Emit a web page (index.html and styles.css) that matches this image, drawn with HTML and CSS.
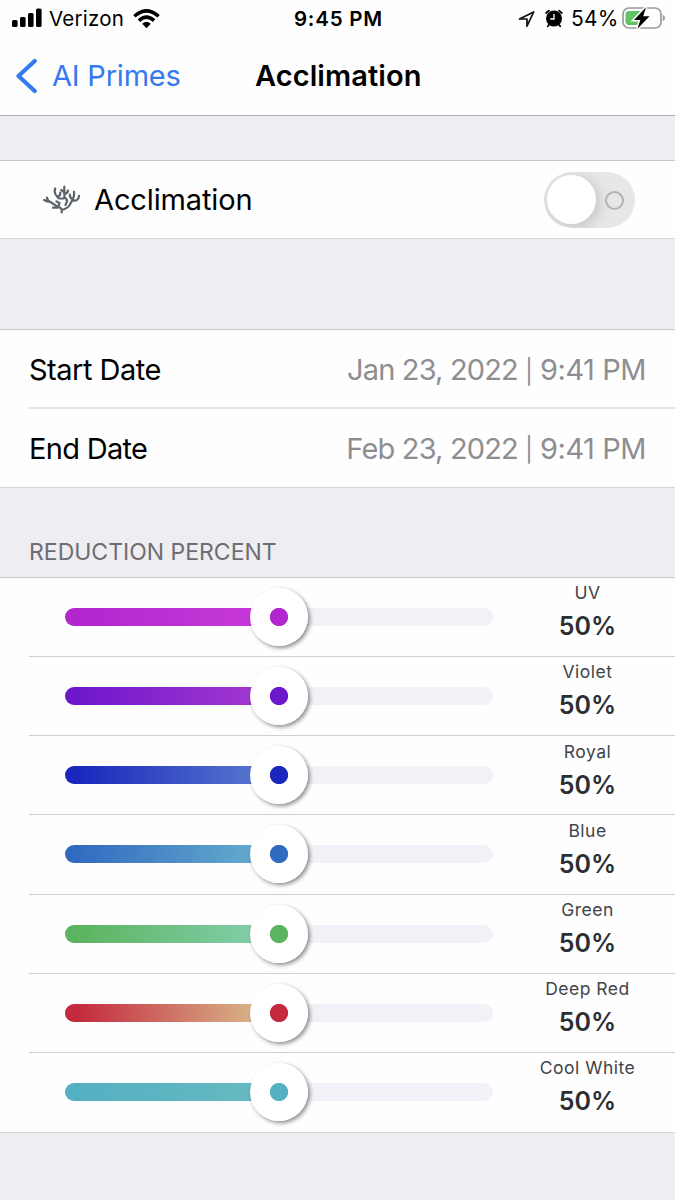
FILE: index.html
```html
<!DOCTYPE html>
<html lang="en">
<head>
<meta charset="utf-8">
<title>Acclimation</title>
<link rel="stylesheet" href="styles.css">
</head>
<body>
<header class="header">
  <div class="status">
    <div class="status-left">
      <svg class="signal" width="30" height="20" viewBox="0 0 30 20"><rect x="0" y="12" width="5.6" height="7" rx="1.5"/><rect x="8" y="9" width="5.6" height="10" rx="1.5"/><rect x="16" y="5" width="5.6" height="14" rx="1.5"/><rect x="24" y="0.5" width="5.6" height="18.5" rx="1.5"/></svg>
      <span class="carrier">Verizon</span>
      <svg class="wifi" width="27" height="20" viewBox="0 0 27 20"><g fill="none" stroke="#000" stroke-width="3.5"><path d="M1.4 7.2Q13.5-3.600 25.6 7.200"/><path d="M5.900 11.600Q13.500 4.800 21.100 11.600"/></g><path d="M9.200 14.700Q13.500 11 17.800 14.700L13.500 19.200Z"/></svg>
    </div>
    <span class="clock">9:45 PM</span>
    <div class="status-right">
      <svg class="location" width="18" height="18" viewBox="0 0 18 18"><path d="M1.5 9 15.7 2 9 16.2V9Z" fill="none" stroke="#111" stroke-width="1.7" stroke-linejoin="round"/></svg>
      <svg class="alarm" width="18" height="20" viewBox="0 0 18 20"><circle cx="9" cy="9.500" r="8"/><path d="M1.2 4 4 1.600M16.800 4 14 1.600M4 15.700 2.800 17.300M14 15.700l1.200 1.600" stroke="#000" stroke-width="1.800" stroke-linecap="round"/><path d="M9 5v5H5.200" fill="none" stroke="#fff" stroke-width="1.300"/></svg>
      <span class="percent">54%</span>
      <svg class="battery" width="43" height="24" viewBox="0 0 43 24"><rect x="1" y="1" width="38" height="20" rx="6" fill="none" stroke="#9b9b9b" stroke-width="1.7"/><path d="M40.8 7.800q2.200.9 2.200 3.200t-2.200 3.200Z" fill="#9b9b9b"/><path d="M7 4h15v14H7q-3.500-.2-3.500-3.700V7.500Q3.500 4 7 4Z" fill="#62c466"/><path d="M24 .200 12 13h6.300L15.500 21.800 27.600 9.300H21.200Z" fill="#000" stroke="#fff" stroke-width="3" paint-order="stroke"/></svg>
    </div>
  </div>
  <nav class="nav">
    <svg class="back" width="22" height="36" viewBox="0 0 22 36"><path d="M18.700 3 2.500 18 18.700 33" fill="none" stroke="#3579f0" stroke-width="4.200" stroke-linecap="round" stroke-linejoin="round"/></svg>
    <a class="back-label">AI Primes</a>
    <h1 class="title">Acclimation</h1>
  </nav>
</header>
<main>
  <section class="group toggle-row">
    <svg class="coral" width="38" height="30" viewBox="0 0 38 30"><g fill="none" stroke="#5b636c" stroke-width="2.200" stroke-linecap="round" stroke-linejoin="round"><path d="M18.700 27.500V24.500Q18 22.500 14.500 21.700L7.500 17Q4 16.800 1.200 15M4 12.500Q4.300 15.500 7.500 17M10 22.700H15M15.500 21.500 16.500 18 13.500 16.500M12.200 3.500Q10.500 8 14 11.500L16 13.500H20.500Q22 12.500 21.300 9.500V1.700M14.500 11.500Q17.500 11 17.300 7.500M18.300 5 21 7M25 5.500Q24.500 8.500 21.500 8.800M21.500 12.500Q24 13.500 24 16.500L22.500 20M18.700 25Q26 23 27.500 18.500L30 13.800Q31.500 10 31 6.800M26.800 9.500Q26.800 13 29.500 14M29.500 15.500Q35.500 16.500 36 10.800"/></g></svg>
    <span class="toggle-label">Acclimation</span>
    <div class="switch"><div class="knob"></div><div class="off-mark"></div></div>
  </section>
  <section class="group dates">
    <div class="date-row"><span class="start">Start Date</span><span class="value"><span class="day">Jan 23, 2022</span><span class="bar">|</span><span class="time">9:41 PM</span></span></div>
    <div class="date-row second"><span class="end">End Date</span><span class="value"><span class="day">Feb 23, 2022</span><span class="bar">|</span><span class="time">9:41 PM</span></span></div>
  </section>
  <h2 class="caption">REDUCTION PERCENT</h2>
  <section class="group channels">
    <div class="channel uv"><div class="track"><div class="fill"></div><div class="thumb"></div></div><div class="reading"><span class="name">UV</span><b class="amount">50%</b></div></div>
    <div class="channel violet"><div class="track"><div class="fill"></div><div class="thumb"></div></div><div class="reading"><span class="name">Violet</span><b class="amount">50%</b></div></div>
    <div class="channel royal"><div class="track"><div class="fill"></div><div class="thumb"></div></div><div class="reading"><span class="name">Royal</span><b class="amount">50%</b></div></div>
    <div class="channel blue"><div class="track"><div class="fill"></div><div class="thumb"></div></div><div class="reading"><span class="name">Blue</span><b class="amount">50%</b></div></div>
    <div class="channel green"><div class="track"><div class="fill"></div><div class="thumb"></div></div><div class="reading"><span class="name">Green</span><b class="amount">50%</b></div></div>
    <div class="channel red"><div class="track"><div class="fill"></div><div class="thumb"></div></div><div class="reading"><span class="name">Deep Red</span><b class="amount">50%</b></div></div>
    <div class="channel white"><div class="track"><div class="fill"></div><div class="thumb"></div></div><div class="reading"><span class="name">Cool White</span><b class="amount">50%</b></div></div>
  </section>
</main>
</body>
</html>
```
FILE: styles.css
```css
* { box-sizing: border-box; }
body { margin: 0; width: 675px; height: 1200px; overflow: hidden; background: #eeedf2; color: #000; font-family: Inter, "Liberation Sans", sans-serif; white-space: nowrap; }
svg { display: block; flex: none; }
h1, h2 { margin: 0; }
.header { height: 116px; background: #fefefe; border-bottom: 1px solid #acacb0; }
.status { display: grid; grid-template-columns: 325px auto 1fr; height: 37px; align-items: center; justify-content: space-between; padding: 0 10px 0 12px; font-size: 20.5px; }
.status { grid-template-columns: 1fr auto 1fr; }
.status-left, .status-right { display: flex; align-items: center; }
.status-right { justify-content: flex-end; }
.signal { margin-top: -1px; }
.carrier { margin-left: 7px; width: 76px; letter-spacing: 0.25px; }
.wifi { margin-left: 8px; }
.clock { font-weight: 600; font-size: 20.5px; letter-spacing: 0.8px; }
.location { margin-right: 9px; }
.percent { width: 46px; margin: 0 5px 0 8px; font-size: 21px; letter-spacing: 0.2px; }
.nav { display: flex; align-items: center; height: 77px; padding-left: 16px; }
.back-label { margin-left: 14px; width: 203px; color: #3579f0; font-size: 29px; letter-spacing: -0.2px; }
.title { font-size: 29px; font-weight: 600; letter-spacing: 0.08px; }
.group { background: #fefefe; border-top: 1px solid #c9c9cd; border-bottom: 1px solid #d5d5d8; }
.toggle-row { display: flex; align-items: center; margin-top: 44px; height: 79px; padding: 0 40px 0 43px; }
.toggle-label { margin-left: 13px; font-size: 29px; letter-spacing: -0.13px; }
.switch { display: flex; align-items: center; margin-left: auto; width: 91.5px; height: 56px; padding-left: 3.5px; border-radius: 28px; background: #e7e7e7; overflow: hidden; }
.knob { width: 49px; height: 49px; border-radius: 50%; background: #fff; box-shadow: 3px 3px 14px rgba(0,0,0,.16); }
.off-mark { width: 19px; height: 19px; margin: 2px 0 0 8.5px; border: 2px solid #b3b3b3; border-radius: 50%; }
.dates { margin-top: 90px; height: 159px; padding-left: 29px; }
.date-row { display: flex; align-items: center; justify-content: space-between; height: 77px; padding: 2px 29px 0 0; font-size: 29px; }
.second { height: 80px; padding-top: 0; border-top: 2px solid #e2e2e4; }
.start { letter-spacing: -0.5px; }
.end { letter-spacing: -0.7px; }
.value { display: flex; align-items: center; color: #8e8e92; }
.day { letter-spacing: -0.83px; }
.bar { width: 22px; padding-top: 3px; text-align: center; font-size: 24px; }
.time { letter-spacing: -0.45px; }
.caption { height: 89px; padding: 50px 0 0 29px; color: #6d6d72; font-size: 23px; font-weight: 400; line-height: 28px; }
.channels { height: 555.6px; display: grid; grid-template-rows: repeat(7, 79.15px); padding-left: 29px; }
.channel { display: flex; align-items: center; padding-left: 36px; border-bottom: 1px solid #cfcfd2; }
.channel:last-child { border-bottom-color: transparent; }
.track { display: flex; align-items: center; width: 428px; height: 18px; border-radius: 9px; background: #f1f2f7; }
.fill { width: 214px; height: 18px; border-radius: 9px 0 0 9px; background: linear-gradient(90deg, var(--from) 5%, var(--to)); }
.thumb { flex: none; width: 58px; height: 58px; margin-left: -29px; border-radius: 50%; background: radial-gradient(circle, var(--from) 0 8.7px, #fff 9.5px); box-shadow: 2px 2px 4px rgba(0,0,0,.45); }
.reading { display: flex; flex-direction: column; align-items: center; align-self: flex-start; width: 189px; padding-top: 3.3px; color: #2b2f33; }
.name { color: #414448; font-size: 17.5px; line-height: 24px; letter-spacing: 0.5px; }
.amount { margin-top: 5px; font-size: 25px; font-weight: 600; line-height: 32px; letter-spacing: 0.1px; }
.uv { --from: #b126cd; --to: #c93bda; }
.violet { --from: #6d17cc; --to: #aa3bd1; }
.royal { --from: #1927bd; --to: #5d7fce; }
.blue { --from: #316bbf; --to: #6bb3cf; }
.green { --from: #5bb45f; --to: #88d0b3; }
.red { --from: #c4293d; --to: #dbc692; }
.white { --from: #54b0c3; --to: #68bac0; }
```
